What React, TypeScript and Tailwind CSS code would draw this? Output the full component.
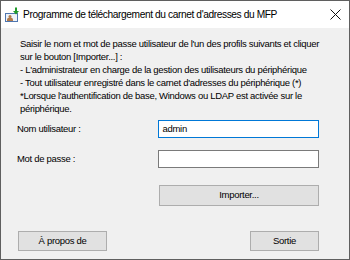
import React from "react";

function AppIcon() {
  return (
    <svg width="16" height="16" viewBox="0 0 16 16">
      <rect x="1.5" y="6.5" width="12" height="8" fill="#eef3f9" stroke="#4f76b0" />
      <circle cx="6" cy="9.5" r="1.5" fill="#b07a4a" />
      <path d="M3 14v-1.5c0-1.3 1.4-2 3-2s3 .7 3 2V14z" fill="#b07a4a" />
      <path d="M12 0.5v4" stroke="#1f9a2a" strokeWidth="2" />
      <path d="M9 4l3 3.5 3-3.5z" fill="#1f9a2a" />
    </svg>
  );
}

export default function App() {
  const body = { fontFamily: '"Liberation Sans", Arial, sans-serif' };
  return (
    <div
      className="w-[350px] h-[260px] border border-[#5f5f5f] bg-[#f0f0f0] flex flex-col text-black overflow-hidden"
      style={body}
    >
      <div className="h-[27px] bg-white flex items-center shrink-0">
        <div className="ml-[3px] mr-[3px] flex items-center">
          <AppIcon />
        </div>
        <div className="text-[10.2px] flex-1 whitespace-nowrap tracking-[-0.4px]">
          Programme de téléchargement du carnet d'adresses du MFP
        </div>
        <div className="w-[26px] flex items-center justify-center mr-[1px]">
          <svg width="11" height="11" viewBox="0 0 11 11">
            <path d="M0.5 0.5l10 10M10.5 0.5l-10 10" stroke="#111" strokeWidth="1" />
          </svg>
        </div>
      </div>
      <div className="flex-1 flex flex-col pl-[16px] pr-[30px] pt-[9px] text-[9.5px] tracking-[-0.3px]">
        <div className="pl-[3px] leading-[13px] whitespace-nowrap">
          <div>Saisir le nom et mot de passe utilisateur de l'un des profils suivants et cliquer</div>
          <div>sur le bouton [Importer...] :</div>
          <div>- L'administrateur en charge de la gestion des utilisateurs du périphérique</div>
          <div>- Tout utilisateur enregistré dans le carnet d'adresses du périphérique (*)</div>
          <div>*Lorsque l'authentification de base, Windows ou LDAP est activée sur le</div>
          <div>périphérique.</div>
        </div>
        <div className="mt-[5px] flex items-center">
          <div className="w-[141px]">Nom utilisateur :</div>
          <div className="w-[162px] h-[18px] border border-[#0078d7] bg-white flex items-center pl-[4px]">
            admin
          </div>
        </div>
        <div className="mt-[12px] flex items-center">
          <div className="w-[141px]">Mot de passe :</div>
          <div className="w-[162px] h-[18px] border border-[#7a7a7a] bg-white" />
        </div>
        <div className="mt-[17px] flex">
          <div className="ml-[142px] w-[160px] h-[21px] border border-[#adadad] bg-[#e1e1e1] flex items-center justify-center">
            Importer...
          </div>
        </div>
        <div className="mt-[25px] flex justify-between">
          <div className="ml-[1px] w-[89px] h-[20px] border border-[#adadad] bg-[#e1e1e1] flex items-center justify-center">
            À propos de
          </div>
          <div className="w-[69px] h-[20px] border border-[#adadad] bg-[#e1e1e1] flex items-center justify-center">
            Sortie
          </div>
        </div>
      </div>
    </div>
  );
}
